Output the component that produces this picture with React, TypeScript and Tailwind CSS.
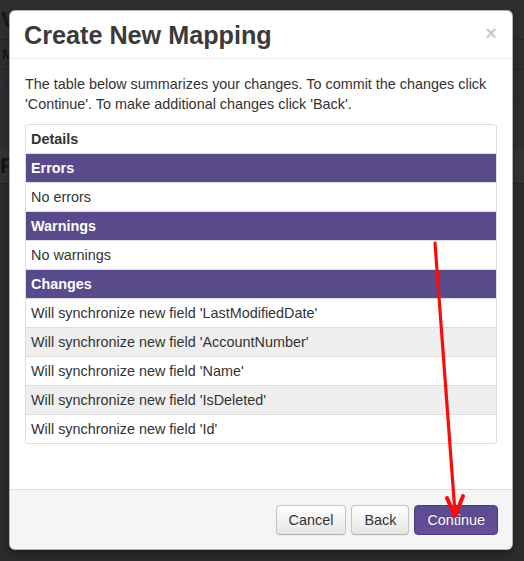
import React from "react";

const CHANGES = ["LastModifiedDate", "AccountNumber", "Name", "IsDeleted", "Id"];

function SectionRow({ label }: { label: string }) {
  return (
    <div className="h-[29px] border-t border-[#dddddd] bg-[#584a8b] px-[5px] pt-[4px] text-[14.4px] font-bold leading-[20px] text-white">
      {label}
    </div>
  );
}

function Row({ text, striped }: { text: string; striped?: boolean }) {
  return (
    <div
      className={`h-[29px] border-t border-[#dddddd] px-[5px] pt-[4px] text-[14.4px] leading-[20px] text-[#333333] ${
        striped ? "bg-[#efefef]" : "bg-white"
      }`}
    >
      {text}
    </div>
  );
}

function Backdrop() {
  // the page behind the modal, dimmed
  return (
    <div className="flex h-full flex-col bg-[#2e2e2e] text-[#151515] [font-family:'Liberation_Sans',Arial,sans-serif]">
      <div className="flex h-[40px] items-center border-b border-[#262626] pl-[1px] text-[22px] font-bold">V</div>
      <div className="flex h-[30px] items-center border-b border-[#262626] pl-[2px] text-[14px] font-bold">M</div>
      <div className="flex h-[33px] items-center border-b border-[#2a2a2a] pl-[3px] text-[14px] text-[#1c2a3a] underline">N</div>
      <div className="h-[45px]" />
      <div className="flex h-[36px] items-center border-b border-[#252525] bg-[#323232] text-[22px] font-bold">F</div>
      <div className="flex-1 bg-[#2b2b2b]" />
    </div>
  );
}

export default function App() {
  return (
    <div className="relative h-[561px] w-[524px] overflow-hidden [font-family:'Liberation_Sans',Arial,sans-serif]">
      <Backdrop />

      <div className="absolute left-[9px] top-[10px] flex w-[504px] flex-col overflow-hidden rounded-[6px] border border-black/30 bg-white shadow-[0_3px_7px_rgba(0,0,0,0.3)]">
        <div className="flex h-[48px] items-center justify-between border-b border-[#eeeeee] pl-[14px] pr-[15px]">
          <h3 className="text-[25.2px] font-bold leading-[30px] text-[#3b3b3b]">Create New Mapping</h3>
          <span className="mt-[-4px] text-[20px] font-bold leading-[20px] text-[#cccccc]">×</span>
        </div>

        <div className="h-[430px] p-[15px]">
          <p className="mb-[10px] text-[14.4px] leading-[20px] text-[#333333]">
            The table below summarizes your changes. To commit the changes click 'Continue'. To make additional changes
            click 'Back'.
          </p>
          <div className="overflow-hidden rounded-[4px] border border-t-0 border-[#dddddd]">
            <div className="h-[29px] rounded-t-[4px] border-t border-[#dddddd] bg-white px-[5px] pt-[4px] text-[14.4px] font-bold leading-[20px] text-[#333333]">
              Details
            </div>
            <SectionRow label="Errors" />
            <Row text="No errors" />
            <SectionRow label="Warnings" />
            <Row text="No warnings" />
            <SectionRow label="Changes" />
            {CHANGES.map((c, i) => (
              <Row key={c} text={`Will synchronize new field '${c}'`} striped={i % 2 === 1} />
            ))}
          </div>
        </div>

        <div className="flex h-[60px] items-center justify-end gap-[5px] border-t border-[#dddddd] bg-[#f5f5f5] px-[14px]">
          <button className="h-[30px] rounded-[4px] border border-[#c5c5c5] border-b-[#b3b3b3] bg-gradient-to-b from-white to-[#e6e6e6] px-[12px] text-[14.4px] leading-[20px] text-[#333333] shadow-[inset_0_1px_0_rgba(255,255,255,0.2),0_1px_2px_rgba(0,0,0,0.05)]">
            Cancel
          </button>
          <button className="h-[30px] rounded-[4px] border border-[#c5c5c5] border-b-[#b3b3b3] bg-gradient-to-b from-white to-[#e6e6e6] px-[12px] text-[14.4px] leading-[20px] text-[#333333] shadow-[inset_0_1px_0_rgba(255,255,255,0.2),0_1px_2px_rgba(0,0,0,0.05)]">
            Back
          </button>
          <button className="h-[30px] rounded-[4px] border border-[#4a3c7c] bg-gradient-to-b from-[#5a4b90] to-[#6a4c97] px-[12px] text-[14.4px] leading-[20px] text-white [text-shadow:0_-1px_0_rgba(0,0,0,0.25)]">
            Continue
          </button>
        </div>
      </div>

      <svg className="pointer-events-none absolute left-0 top-0" width="524" height="561" viewBox="0 0 524 561">
        <line x1="435" y1="243" x2="455" y2="513" stroke="#ff0a0a" strokeWidth="3.2" strokeLinecap="round" />
        <polyline
          points="447,498 455,516 463,496"
          fill="none"
          stroke="#ff0a0a"
          strokeWidth="4"
          strokeLinecap="round"
          strokeLinejoin="round"
        />
      </svg>
    </div>
  );
}
